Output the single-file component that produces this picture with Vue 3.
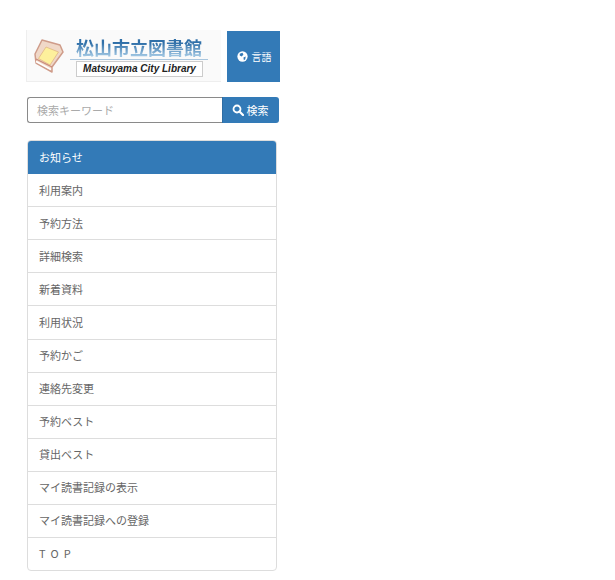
<script setup>
const items = ['利用案内','予約方法','詳細検索','新着資料','利用状況','予約かご','連絡先変更','予約ベスト','貸出ベスト','マイ読書記録の表示','マイ読書記録への登録','T O P']
</script>

<template>
  <div class="page">
    <header class="top">
      <div class="logo">
        <svg class="book" width="33" height="37" viewBox="0 0 33 37">
          <path d="M9 2 L27 7 L30 14 L19 29 L19 34 L3 25 L2 16 Z" fill="#f0d8c8" stroke="#cf9c8a" stroke-width="1.500" stroke-linejoin="round"/>
          <path d="M13 9 L25.500 14 L17 27 L5.500 20.500 Z" fill="#fdf09c" stroke="#e6c08e" stroke-width="1"/>
          <path d="M3 21 L19 29" fill="none" stroke="#c98a78" stroke-width="1.300"/>
          <path d="M3 23.500 L18 31.500" fill="none" stroke="#fff" stroke-width="1.500"/>
        </svg>
        <div class="logo-text">
          <div class="logo-jp">松山市立図書館</div>
          <div class="logo-en">Matsuyama City Library</div>
        </div>
      </div>
      <button class="lang">
        <svg width="11" height="11" viewBox="0 0 12 12"><circle cx="6" cy="6" r="5.600" fill="#fff"/><path d="M3 3 L6 2 L7 4 L5 6 L3 5 Z M7 7 L9.500 6 L9 9 L7.500 10 Z" fill="#337ab7"/></svg>
        <span>言語</span>
      </button>
    </header>

    <div class="search">
      <div class="input">検索キーワード</div>
      <button class="go">
        <svg width="12" height="12" viewBox="0 0 12 12"><circle cx="5" cy="5" r="3.500" fill="none" stroke="#fff" stroke-width="1.800"/><path d="M7.500 7.500 L11 11" stroke="#fff" stroke-width="2.200" stroke-linecap="round"/></svg>
        <span>検索</span>
      </button>
    </div>

    <nav class="panel">
      <div class="head">お知らせ</div>
      <div v-for="(item, i) in items" :key="i" class="row">{{ item }}</div>
    </nav>
  </div>
</template>

<style>
html, body { background: #fff; }
</style>

<style scoped>
.page {
  width: 615px;
  height: 580px;
  box-sizing: border-box;
  padding: 30px 0 0 26px;
  font-family: "Noto Sans CJK JP", "Noto Sans", sans-serif;
  font-size: 11px;
  color: #666;
  overflow: hidden;
}
.top { display: flex; width: 254px; height: 52px; }
.logo {
  width: 195px;
  height: 52px;
  box-sizing: border-box;
  background: #fafafa;
  border-bottom: 1px solid #eee;
  border-left: 1px solid #eee;
  display: flex;
  padding: 8px 0 0 6px;
  gap: 4px;
}
.book { flex: none; }
.logo-text { display: flex; flex-direction: column; margin-top: -2px; }
.logo-jp {
  font-size: 18px;
  line-height: 23px;
  font-weight: 700;
  width: 138px;
  box-sizing: border-box;
  padding-left: 6px;
  white-space: nowrap;
  border-bottom: 1px solid #a9c6de;
  background: linear-gradient(#2f6fa8 30%, #9cc3e0 85%);
  -webkit-background-clip: text;
  background-clip: text;
  color: transparent;
}
.logo-en {
  margin: 1px 0 0 6px;
  width: 127px;
  height: 16px;
  box-sizing: border-box;
  border: 1px solid #ccc;
  background: #fff;
  font: italic 700 10px/14px "Liberation Sans", sans-serif;
  color: #222;
  text-align: center;
  white-space: nowrap;
}
.lang {
  margin: 1px 0 0 6px;
  width: 53px;
  height: 51px;
  border: 0;
  padding: 0 0 0 1px;
  background: #337ab7;
  color: #fff;
  font: inherit;
  font-size: 10px;
  display: flex;
  align-items: center;
  justify-content: center;
  gap: 4px;
}
.search { display: flex; width: 252px; height: 26px; margin: 15px 0 0 1px; }
.input {
  flex: 1;
  box-sizing: border-box;
  border: 1px solid #8a8a8a;
  border-right: 0;
  border-radius: 3px 0 0 3px;
  padding-left: 9px;
  line-height: 24px;
  color: #aaa;
}
.go {
  width: 57px;
  border: 0;
  border-left: 1px solid #2e6da4;
  border-radius: 0 3px 3px 0;
  padding: 0 2px 0 0;
  background: #337ab7;
  color: #fff;
  font: inherit;
  display: flex;
  align-items: center;
  justify-content: center;
  gap: 3px;
}
.panel {
  width: 250px;
  margin: 17px 0 0 1px;
  box-sizing: border-box;
  border: 1px solid #ddd;
  border-radius: 4px;
  overflow: hidden;
}
.head {
  height: 34px;
  margin: -1px -1px 0;
  background: #337ab7;
  color: #fff;
  line-height: 34px;
  padding-left: 12px;
}
.row {
  height: 33px;
  box-sizing: border-box;
  border-bottom: 1px solid #ddd;
  padding-left: 11px;
  line-height: 32px;
}
.row:nth-child(6) { height: 34px; }
.row:nth-child(n+7) { line-height: 30px; }
.row:last-child { height: 32px; border-bottom: 0; word-spacing: 2.500px; }
</style>
